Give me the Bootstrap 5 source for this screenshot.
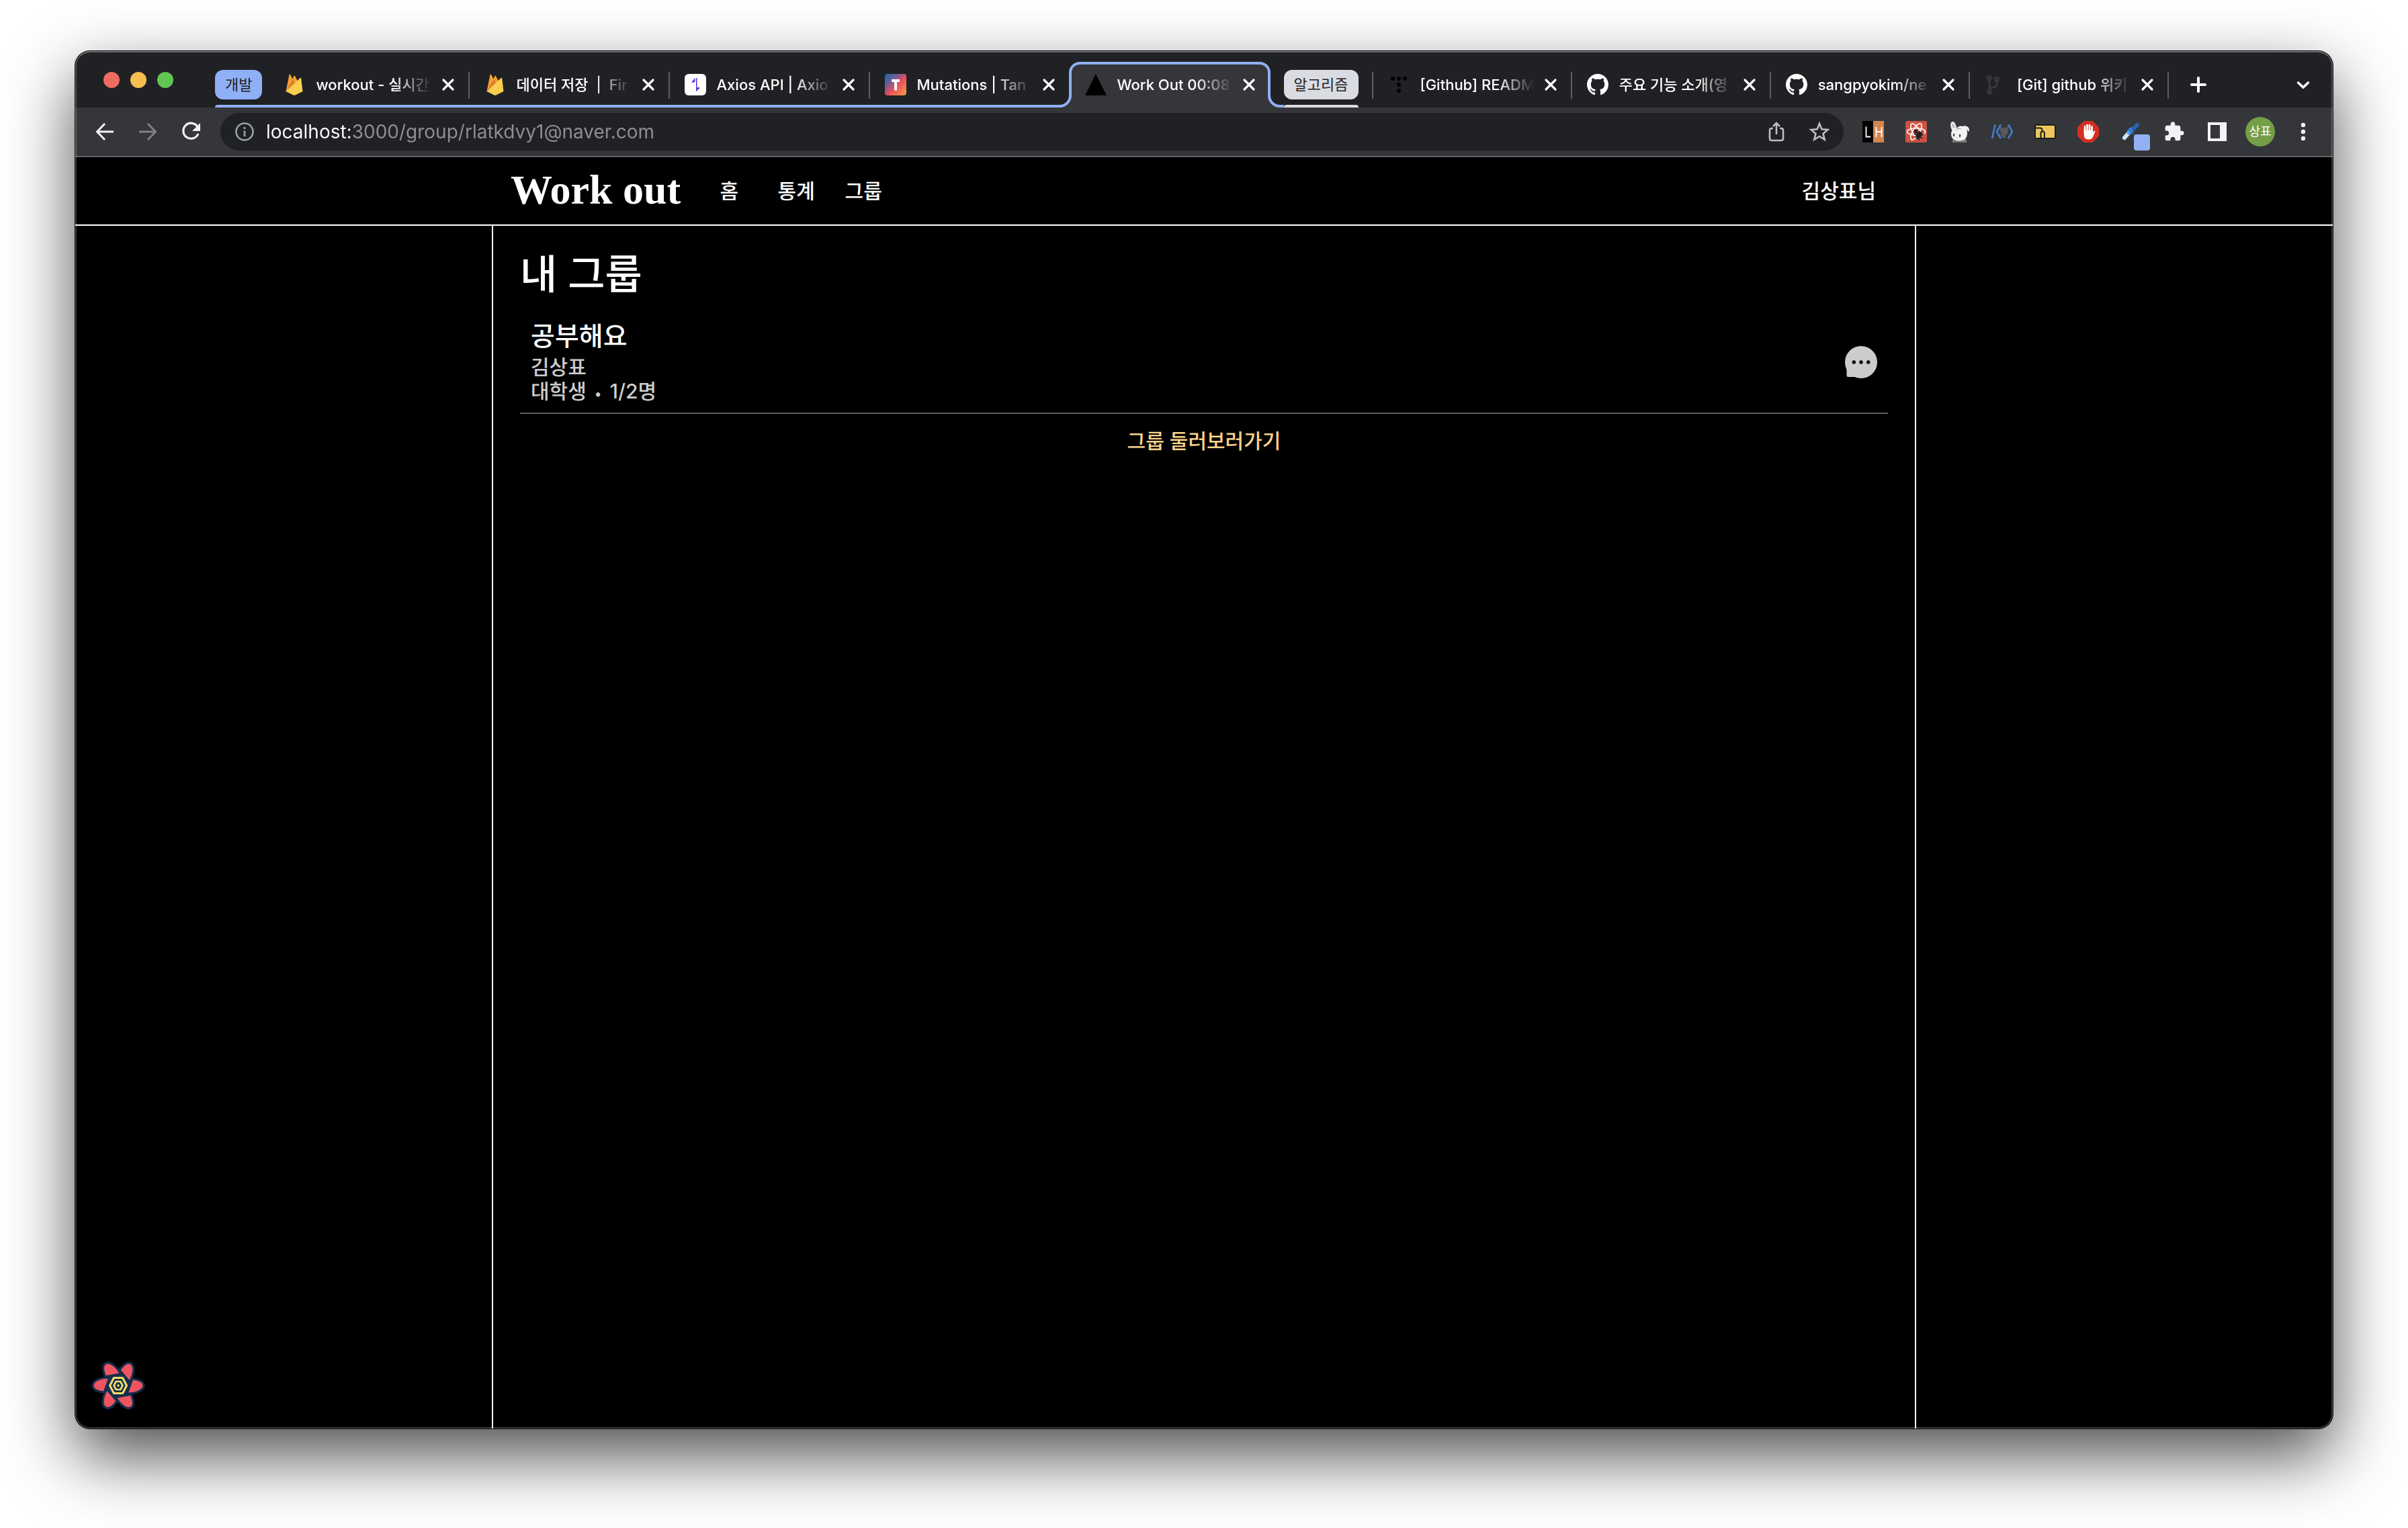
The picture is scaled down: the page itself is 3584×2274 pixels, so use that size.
<!DOCTYPE html>
<html lang="ko">
<head>
<meta charset="utf-8">
<meta name="viewport" content="width=device-width, initial-scale=1">
<title>Work Out</title>
<link href="https://cdn.jsdelivr.net/npm/bootstrap@5.3.0/dist/css/bootstrap.min.css" rel="stylesheet">
<style>
  :root {
    --strip: #202124;
    --bar: #35363a;
    --blue: #8fb0f5;
    --pale: #dbdce1;
  }
  body {
    background: #fff;
    font-family: Inter, "Noto Sans CJK KR", sans-serif;
    font-size: 22px;
    line-height: 32px;
    padding: 76px 112px 148px;
  }
  svg { display: block; flex: none; }
  button { padding: 0; border: 0; background: none; color: inherit; }
  .window {
    background: #000;
    border-radius: 22px;
    box-shadow: 0 0 0 1px #111, 0 40px 100px rgba(0, 0, 0, .7);
  }
  .window::after {
    content: "";
    position: absolute;
    inset: 0;
    border-radius: inherit;
    border: 2px solid rgba(255, 255, 255, .22);
    border-top-color: rgba(255, 255, 255, .36);
    pointer-events: none;
  }

  /* tab strip */
  .tabstrip { background: var(--strip); height: 84px; padding-left: 42px; padding-right: 12px; border-radius: 22px 22px 0 0; }
  .lights { gap: 16px; padding-top: 31px; padding-right: 62px; }
  .lights i { width: 24px; height: 24px; border-radius: 50%; }
  .tabgroup-a { flex: 5 1 88px; min-width: 0; }
  .tabgroup-b { flex: 4 1 0; min-width: 0; }
  .chip-wrap { height: 56px; flex: none; }
  .chip-wrap::after {
    content: "";
    position: absolute;
    left: 0; right: 0; bottom: 0;
    height: 4px;
    background: currentColor;
    border-top-left-radius: 4px;
  }
  .chip-blue { color: var(--blue); padding-right: 8px; }
  .chip-pale { color: var(--pale); margin: 0 20px 0 22px; }
  .chip-pale::after { border-top-right-radius: 4px; }
  .chip { height: 44px; padding: 0 15px; border-radius: 12px; background: currentColor; white-space: nowrap; }
  .chip span { color: #202124; }
  .browser-tab { flex: 1 1 0; min-width: 0; height: 68px; padding: 0 18px 0 24px; color: #fff; font-weight: 500; }
  .browser-tab.split::before, .split-end {
    content: "";
    position: absolute;
    left: 0; top: 15px;
    width: 2px; height: 40px;
    background: #5c5e62;
  }
  .browser-tab.lined::after {
    content: "";
    position: absolute;
    left: 0; right: 0; bottom: 0;
    height: 4px;
    background: var(--blue);
  }
  .browser-tab.lined.before-active::after { right: 16px; }
  .browser-tab.active-tab {
    background: var(--bar);
    border: 4px solid var(--blue);
    border-bottom: 0;
    border-radius: 16px 16px 0 0;
    padding: 0 16px 4px 20px;
    margin-right: -2px;
  }
  .flare { position: absolute; bottom: 0; }
  .flare-l { left: -20px; }
  .flare-r { right: -24px; }
  .tab-title {
    flex: 1 1 0;
    min-width: 0;
    margin: 0 12px 0 16px;
    overflow: hidden;
    white-space: nowrap;
    text-align: left;
    -webkit-mask-image: linear-gradient(90deg, #000 calc(100% - 56px), transparent);
    mask-image: linear-gradient(90deg, #000 calc(100% - 56px), transparent);
  }
  .tab-btn { width: 92px; height: 68px; flex: none; }
  .tab-menu { width: 64px; height: 68px; margin-left: 78px; flex: none; }

  /* toolbar */
  .toolbar { background: var(--bar); height: 74px; padding: 0 12px; border-bottom: 2px solid #5e6063; }
  .tool { width: 64px; height: 56px; display: flex; align-items: center; justify-content: center; flex: none; }
  .address { height: 56px; margin: 0 12px; padding: 0 4px 0 22px; border-radius: 28px; background: var(--strip); }
  .address input {
    flex: 1 1 0;
    min-width: 0;
    margin-left: 18px;
    padding: 0;
    border: 0;
    outline: 0;
    font-size: 28px;
    line-height: 40px;
    background: linear-gradient(90deg, #fff 125px, #8e9094 0);
    -webkit-background-clip: text;
    background-clip: text;
    color: transparent;
  }
  .avatar { width: 44px; height: 44px; border-radius: 50%; background: #749e47; color: #fff; font-size: 18px; }
  .swatch { position: absolute; right: 4px; bottom: 0; width: 24px; height: 24px; border-radius: 4px; background: #92b0f2; }

  /* page */
  .page { font-size: 30px; line-height: 36px; color: #fff; font-weight: 500; }
  .page a { color: inherit; text-decoration: none; }
  .site-header { border-bottom: 2px solid #fff; height: 102px; }
  .column { width: 100%; max-width: 2120px; margin: 0 auto; }
  .site-header .column { padding: 0 60px 0 28px; }
  .brand { font-family: "Liberation Serif", serif; font-weight: 700; font-size: 62px; line-height: 64px; margin-right: 22px; padding-bottom: 4px; }
  .site-link { width: 100px; text-align: center; }
  .main-col { border: solid #fff; border-width: 0 2px; padding: 40px 40px 0; }
  .main-col h1 { font-size: 60px; line-height: 64px; font-weight: 500; margin-bottom: 24px; }
  .group-item { padding: 14px 16px; border-bottom: 2px solid #5b5b5b; }
  .group-item h2 { font-size: 39px; line-height: 44px; font-weight: 500; margin-bottom: 6px; }
  .group-item p { margin: 0; color: #ccc; }
  .dot { font-size: 20px; line-height: 20px; margin: 0 4px; }
  .page .browse { color: #fbd38d; margin-top: 22px; }
  .devtools { position: absolute; left: 24px; bottom: 28px; }
</style>
</head>
<body class="min-vh-100 d-flex flex-column">
<svg width="0" height="0" class="position-absolute" aria-hidden="true">
  <symbol id="x" viewBox="0 0 24 24"><path d="M5 5 19 19M19 5 5 19" stroke="#fff" stroke-width="3.2" stroke-linecap="round"/></symbol>
  <symbol id="fire" viewBox="0 0 32 32"><path d="M3.500 26 8.500 1Q9.200 0 10 1L13.500 7.500 15.500 3Q16.200 2 17 3L24 17 4 26Z" fill="#f6a132"/><path d="M3.500 26 14 7.500 19 16Z" fill="#df7d2c"/><path d="M3.500 26 24.500 6.200Q25.800 5.200 26.200 6.800L28.500 26 17.500 31.600Q16 32.300 14.500 31.600Z" fill="#f9cf4f"/></symbol>
  <symbol id="gh" viewBox="0 0 16 16"><path fill="#fff" d="M8 0C3.580 0 0 3.580 0 8c0 3.540 2.290 6.530 5.470 7.590.4.070.55-.17.55-.38 0-.19-.01-.82-.01-1.490-2.010.37-2.530-.49-2.690-.94-.09-.23-.48-.94-.82-1.130-.28-.15-.68-.52-.01-.53.63-.01 1.080.58 1.230.82.72 1.210 1.870.87 2.330.66.070-.52.28-.87.51-1.070-1.780-.2-3.640-.89-3.640-3.950 0-.87.31-1.590.82-2.150-.08-.2-.36-1.020.08-2.120 0 0 .67-.21 2.200.82.64-.18 1.320-.27 2-.27s1.360.09 2 .27c1.530-1.040 2.200-.82 2.200-.82.44 1.100.16 1.920.08 2.120.51.56.82 1.270.82 2.150 0 3.070-1.870 3.750-3.650 3.950.29.25.54.73.54 1.480 0 1.070-.01 1.930-.01 2.200 0 .21.15.46.55.38A8.010 8.010 0 0 0 16 8c0-4.420-3.580-8-8-8z"/></symbol>
</svg>

<div class="window position-relative flex-grow-1 d-flex flex-column">
  <div class="tabstrip d-flex align-items-end">
    <div class="lights d-flex align-self-start"><i style="background:#ed6b5f"></i><i style="background:#f5bf4f"></i><i style="background:#61c554"></i></div>
    <div class="tabgroup-a d-flex align-items-end">
      <div class="chip-wrap chip-blue position-relative"><button class="chip"><span>개발</span></button></div>
      <div class="browser-tab lined position-relative d-flex align-items-center"><svg width="32" height="32"><use href="#fire"/></svg><span class="tab-title">workout - 실시간</span><button aria-label="닫기"><svg width="24" height="24"><use href="#x"/></svg></button></div>
      <div class="browser-tab lined split position-relative d-flex align-items-center"><svg width="32" height="32"><use href="#fire"/></svg><span class="tab-title">데이터 저장 &nbsp;|&nbsp; Fir</span><button aria-label="닫기"><svg width="24" height="24"><use href="#x"/></svg></button></div>
      <div class="browser-tab lined split position-relative d-flex align-items-center"><svg width="32" height="32" viewBox="0 0 32 32"><rect width="32" height="32" rx="6" fill="#fff"/><path d="M15.500 26V11.500l-4.500 2v-2.200L15.500 6ZM17 6h1.500v14.500l3.500-.8v1.800L17 26Z" fill="#5a30d8"/></svg><span class="tab-title">Axios API | Axio</span><button aria-label="닫기"><svg width="24" height="24"><use href="#x"/></svg></button></div>
      <div class="browser-tab lined split before-active position-relative d-flex align-items-center"><svg width="32" height="32" viewBox="0 0 32 32"><defs><linearGradient id="tq" x1="0" y1="0" x2="1" y2="1"><stop offset="0" stop-color="#1767b3"/><stop offset=".3" stop-color="#6a5e97"/><stop offset=".55" stop-color="#ea4e5c"/><stop offset="1" stop-color="#f5a04a"/></linearGradient></defs><rect width="32" height="32" rx="4" fill="url(#tq)"/><path d="M10 8h12v4h-4v12.500h-4V12h-4z" fill="#fff"/></svg><span class="tab-title">Mutations | Tan</span><button aria-label="닫기"><svg width="24" height="24"><use href="#x"/></svg></button></div>
      <div class="browser-tab active-tab position-relative d-flex align-items-center"><svg width="32" height="32" viewBox="0 0 32 32"><path d="M16 0 32 32H0Z"/></svg><span class="tab-title">Work Out 00:08</span><button aria-label="닫기"><svg width="24" height="24"><use href="#x"/></svg></button>
        <svg class="flare flare-l" width="20" height="20" viewBox="0 0 20 20" fill="none"><path fill="#35363a" d="M0 0h20v20H0z"/><path fill="#202124" d="M0 0h18v2A16 16 0 0 1 2 18H0z"/><path d="M18 0v2A16 16 0 0 1 2 18H0" stroke="#8fb0f5" stroke-width="4"/></svg>
        <svg class="flare flare-r" width="24" height="20" viewBox="0 0 24 20" fill="none"><path fill="#35363a" d="M0 0h24v20H0z"/><path fill="#202124" d="M24 0H2v2a16 16 0 0 0 16 16h6z"/><path d="M2 0v2a16 16 0 0 0 16 16h6" stroke="#8fb0f5" stroke-width="4"/></svg>
      </div>
    </div>
    <div class="chip-wrap chip-pale position-relative"><button class="chip"><span>알고리즘</span></button></div>
    <div class="tabgroup-b d-flex align-items-end">
      <div class="browser-tab split position-relative d-flex align-items-center"><svg width="32" height="32" viewBox="0 0 32 32"><circle cx="7" cy="7" r="3"/><circle cx="16" cy="7" r="3"/><circle cx="25" cy="7" r="3"/><circle cx="16" cy="16" r="3"/><circle cx="16" cy="25" r="3"/></svg><span class="tab-title">[Github] READM</span><button aria-label="닫기"><svg width="24" height="24"><use href="#x"/></svg></button></div>
      <div class="browser-tab split position-relative d-flex align-items-center"><svg width="32" height="32"><use href="#gh"/></svg><span class="tab-title">주요 기능 소개(영</span><button aria-label="닫기"><svg width="24" height="24"><use href="#x"/></svg></button></div>
      <div class="browser-tab split position-relative d-flex align-items-center"><svg width="32" height="32"><use href="#gh"/></svg><span class="tab-title">sangpyokim/ne</span><button aria-label="닫기"><svg width="24" height="24"><use href="#x"/></svg></button></div>
      <div class="browser-tab split position-relative d-flex align-items-center"><svg width="32" height="32" viewBox="0 0 32 32" fill="none" stroke="#38393c" stroke-width="3"><circle cx="7" cy="6" r="2.500"/><circle cx="7" cy="27" r="2.500"/><circle cx="18" cy="8" r="2.500"/><path d="M7 9v15M18 11v5q0 3-4 3.500T7 23"/></svg><span class="tab-title">[Git] github 위키</span><button aria-label="닫기"><svg width="24" height="24"><use href="#x"/></svg></button></div>
    </div>
    <button class="tab-btn position-relative d-flex align-items-center justify-content-center" aria-label="새 탭"><span class="split-end"></span><svg width="24" height="24" viewBox="0 0 24 24"><path d="M12 2v20M2 12h20" stroke="#fff" stroke-width="4" stroke-linecap="round"/></svg></button>
    <button class="tab-menu d-flex align-items-center justify-content-center" aria-label="탭 검색"><svg width="24" height="24" viewBox="0 0 24 24" fill="none"><path d="m4.500 9 7.500 7 7.500-7" stroke="#fff" stroke-width="3.500" stroke-linecap="round"/></svg></button>
  </div>

  <div class="toolbar d-flex align-items-center">
    <button class="tool" aria-label="뒤로"><svg width="32" height="32" viewBox="0 0 32 32" fill="none" stroke="#f1f3f4" stroke-width="3"><path d="M29 16H5M16 4 4.500 16 16 28"/></svg></button>
    <button class="tool" aria-label="앞으로"><svg width="32" height="32" viewBox="0 0 32 32" fill="none" stroke="#808185" stroke-width="3"><path d="M3 16h24M16 4l11.500 12L16 28"/></svg></button>
    <button class="tool" aria-label="새로고침"><svg width="32" height="32" viewBox="0 0 32 32" fill="none"><path d="M26 8.500A11.500 11.500 0 1 0 27 19" stroke="#f1f3f4" stroke-width="3.200"/><path d="M30 3v12H18z" fill="#f1f3f4"/></svg></button>
    <div class="address d-flex align-items-center flex-grow-1">
      <svg width="28" height="28" viewBox="0 0 28 28" fill="none"><circle cx="14" cy="14" r="12.500" stroke="#9aa0a6" stroke-width="2.600"/><path d="M14 12.500V21M14 7v3" stroke="#9aa0a6" stroke-width="2.800"/></svg>
      <input type="text" aria-label="주소" value="localhost:3000/group/rlatkdvy1@naver.com">
      <button class="tool" aria-label="공유"><svg width="32" height="32" viewBox="0 0 32 32" fill="none" stroke="#bdbebf" stroke-width="2.600"><path d="M11 11H9q-3 0-3 3v12q0 3 3 3h14q3 0 3-3V14q0-3-3-3h-2M16 20V4M11 8l5-5 5 5"/></svg></button>
      <button class="tool" aria-label="북마크"><svg width="32" height="32" viewBox="0 0 32 32" fill="none" stroke="#bdbebf" stroke-width="2.600"><path d="m16 4 3.400 8.300 9 .7-6.900 5.900 2.200 8.800L16 23l-7.700 4.700 2.200-8.800L3.600 13l9-.7z"/></svg></button>
    </div>
    <button class="tool" aria-label="Lighthouse"><svg width="32" height="32" viewBox="0 0 32 32" fill="none"><path fill="#000" d="M0 0h16v32H0z"/><path fill="#d38750" d="M16 0h16v32H16z"/><path d="M5.500 8.500v15H12M20.500 9v15M28.500 9v15M20.500 16h8" stroke="#fff" stroke-width="1.800"/></svg></button>
    <button class="tool" aria-label="React"><svg width="32" height="32" viewBox="0 0 32 32" fill="none"><rect width="32" height="32" rx="2.500" fill="#cd5243"/><g stroke="#fff" stroke-width="1.600"><ellipse cx="16" cy="16" rx="13.500" ry="5.200"/><ellipse cx="16" cy="16" rx="13.500" ry="5.200" transform="rotate(60 16 16)"/><ellipse cx="16" cy="16" rx="13.500" ry="5.200" transform="rotate(-60 16 16)"/></g><path fill="#cd5243" d="m16 30 8-14 5 4-3 11z"/><circle cx="15.500" cy="15.500" r="2.800" fill="#222"/><ellipse cx="20" cy="21" rx="4" ry="5.500" transform="rotate(30 20 21)" fill="#222"/><path d="m13 19 12 7M16 27l9-9M21 15v4M14 24l4-1M26 21l-4 0M20 29l0-4" stroke="#222" stroke-width="1.800"/></svg></button>
    <button class="tool" aria-label="Rabbit"><svg width="32" height="32" viewBox="0 0 32 32"><path d="M6.500 27h20l1 5h-22z" fill="#77797a"/><path d="M5.500 14C2 8 3 1 6 1s6 5 6 10Q16 6 21 8q6-2 9 2 2 4 0 6l-3-4q1 2 1 8-2 9-8 9-4 1-9 0-6-2-7-8-.5-4 1.500-7Z" fill="#f3f3f3"/><path d="M6 3q-1.500 4 1 8l2.500-1Q9 5 6 3Z" fill="#b9b9b9"/><ellipse cx="8" cy="21" rx="1.200" ry="2.400" fill="#444"/><ellipse cx="17" cy="22" rx="1.200" ry="2.400" fill="#444"/><path d="M11 13q4-3 8-1M12 25h2" stroke="#999" fill="none"/></svg></button>
    <button class="tool" aria-label="Code"><svg width="32" height="32" viewBox="0 0 32 32" fill="none"><path d="M5.500 5.500 1 26M14 5.500 8 16l6 10M25 5.500 31 16l-6 10" stroke="#437cc4" stroke-width="2.800"/><path fill="#57585a" d="m13 8 4 2h4l4-2v8q-1 4-4 5v4h-5v-3q-3 0-4-2l3 0v-1q-3-2-2-11z"/></svg></button>
    <button class="tool" aria-label="Folder"><svg width="32" height="32" viewBox="0 0 32 32" fill="none"><rect x="1" y="6" width="30" height="20" rx="2" fill="#eec65a" stroke="#1d1d1f" stroke-width="2"/><path d="M1 10.500h7.500q3 0 3 3V16M9.500 26V18.500q0-3 2.700-3t2.700 3V26" stroke="#1d1d1f" stroke-width="2"/></svg></button>
    <button class="tool" aria-label="AdBlock"><svg width="32" height="32" viewBox="0 0 32 32" fill="none"><path d="M9.500 0h13L32 9.500v13L22.500 32h-13L0 22.500v-13z" fill="#d32f23"/><path d="M11 8v10M14.500 6v10M18 6v10M21.500 8.500V18" stroke="#fff" stroke-width="2.700" stroke-linecap="round"/><path fill="#fff" d="M9.700 14h13.200v4l1.500-3q1.500-1 2 .5L23 24q-2 3.500-6.500 3.500-6.800 0-6.800-7z"/></svg></button>
    <button class="tool position-relative" aria-label="색상 추출"><svg width="32" height="32" viewBox="0 0 32 32" fill="none" stroke-linecap="round"><path d="M6 25 14 16" stroke="#cfe6f5" stroke-width="6"/><path d="m13 17 4-4" stroke="#4f9cf0" stroke-width="7"/><path d="m19 12 6-6" stroke="#2a62b3" stroke-width="6"/><path d="m11.500 11.500 8 8" stroke="#2a62b3" stroke-width="2"/></svg><span class="swatch"></span></button>
    <button class="tool" aria-label="확장 프로그램"><svg width="32" height="32" viewBox="0 0 24 24" fill="#f1f3f4"><path d="M20.500 11H19V7c0-1.100-.9-2-2-2h-4V3.500C13 2.120 11.880 1 10.500 1S8 2.120 8 3.500V5H4c-1.100 0-1.990.9-1.990 2v3.800H3.500c1.490 0 2.700 1.210 2.700 2.700s-1.210 2.700-2.700 2.700H2V20c0 1.100.9 2 2 2h3.800v-1.500c0-1.490 1.210-2.700 2.700-2.700 1.490 0 2.700 1.210 2.700 2.700V22H17c1.100 0 2-.9 2-2v-4h1.500c1.380 0 2.500-1.120 2.500-2.500S21.880 11 20.500 11z"/></svg></button>
    <button class="tool" aria-label="측면 패널"><svg width="28" height="28" viewBox="0 0 28 28"><path fill="#f1f3f4" fill-rule="evenodd" d="M0 0h28v28H0zM4 4v20h14V4z"/></svg></button>
    <button class="tool" aria-label="프로필"><span class="avatar d-flex align-items-center justify-content-center">상표</span></button>
    <button class="tool" aria-label="메뉴"><svg width="8" height="28" viewBox="0 0 8 28" fill="#f1f3f4"><circle cx="4" cy="4" r="3.200"/><circle cx="4" cy="14" r="3.200"/><circle cx="4" cy="24" r="3.200"/></svg></button>
  </div>

  <div class="page flex-grow-1 d-flex flex-column">
    <header class="site-header d-flex">
      <div class="column d-flex align-items-center">
        <a class="brand" href="#">Work out</a>
        <nav class="d-flex flex-grow-1">
          <a class="site-link" href="#">홈</a>
          <a class="site-link" href="#">통계</a>
          <a class="site-link" href="#">그룹</a>
        </nav>
        <a href="#">김상표님</a>
      </div>
    </header>
    <main class="column main-col flex-grow-1">
      <h1>내 그룹</h1>
      <div class="group-item d-flex align-items-center justify-content-between">
        <div>
          <h2>공부해요</h2>
          <p>김상표</p>
          <p>대학생 <span class="dot">•</span> 1/2명</p>
        </div>
        <button aria-label="채팅"><svg width="48" height="48" viewBox="0 0 48 48"><circle cx="24" cy="24" r="24" fill="#ccc"/><path d="M2.500 28v15.500q0 2.500 2.500 2.500h13z" fill="#ccc"/><circle cx="13.300" cy="24" r="2.700"/><circle cx="24" cy="24" r="2.700"/><circle cx="34.700" cy="24" r="2.700"/></svg></button>
      </div>
      <div class="text-center browse"><a href="#">그룹 둘러보러가기</a></div>
    </main>
    <button class="devtools" aria-label="React Query Devtools">
      <svg width="80" height="72" viewBox="-40 -36 80 72" stroke-linejoin="round">
        <defs><path id="petal" d="M-13-12C-27-12-38-7-38 0-38 6-30 9-21 10Z" fill="#ef5460" stroke="#122f4e" stroke-width="3.200"/></defs>
        <path d="M-15 0-8-14H8L15 0 8 14H-8Z" fill="#122f4e" stroke="#122f4e" stroke-width="8"/>
        <use href="#petal"/><use href="#petal" transform="rotate(60)"/><use href="#petal" transform="rotate(120)"/><use href="#petal" transform="rotate(180)"/><use href="#petal" transform="rotate(240)"/><use href="#petal" transform="rotate(300)"/>
        <path d="M-12.500 0-6.500-11.500H6.500L12.500 0 6.500 11.500H-6.500Z" fill="#122f4e" stroke="#fbdc65" stroke-width="3"/>
        <path d="M-6.500 0-3.200-6H3.200L6.500 0 3.200 6H-3.200Z" fill="none" stroke="#fbdc65" stroke-width="2.600"/>
        <circle r="1.800" fill="#fbdc65"/>
      </svg>
    </button>
  </div>
</div>
<script src="https://cdn.jsdelivr.net/npm/bootstrap@5.3.0/dist/js/bootstrap.bundle.min.js"></script>
</body>
</html>
